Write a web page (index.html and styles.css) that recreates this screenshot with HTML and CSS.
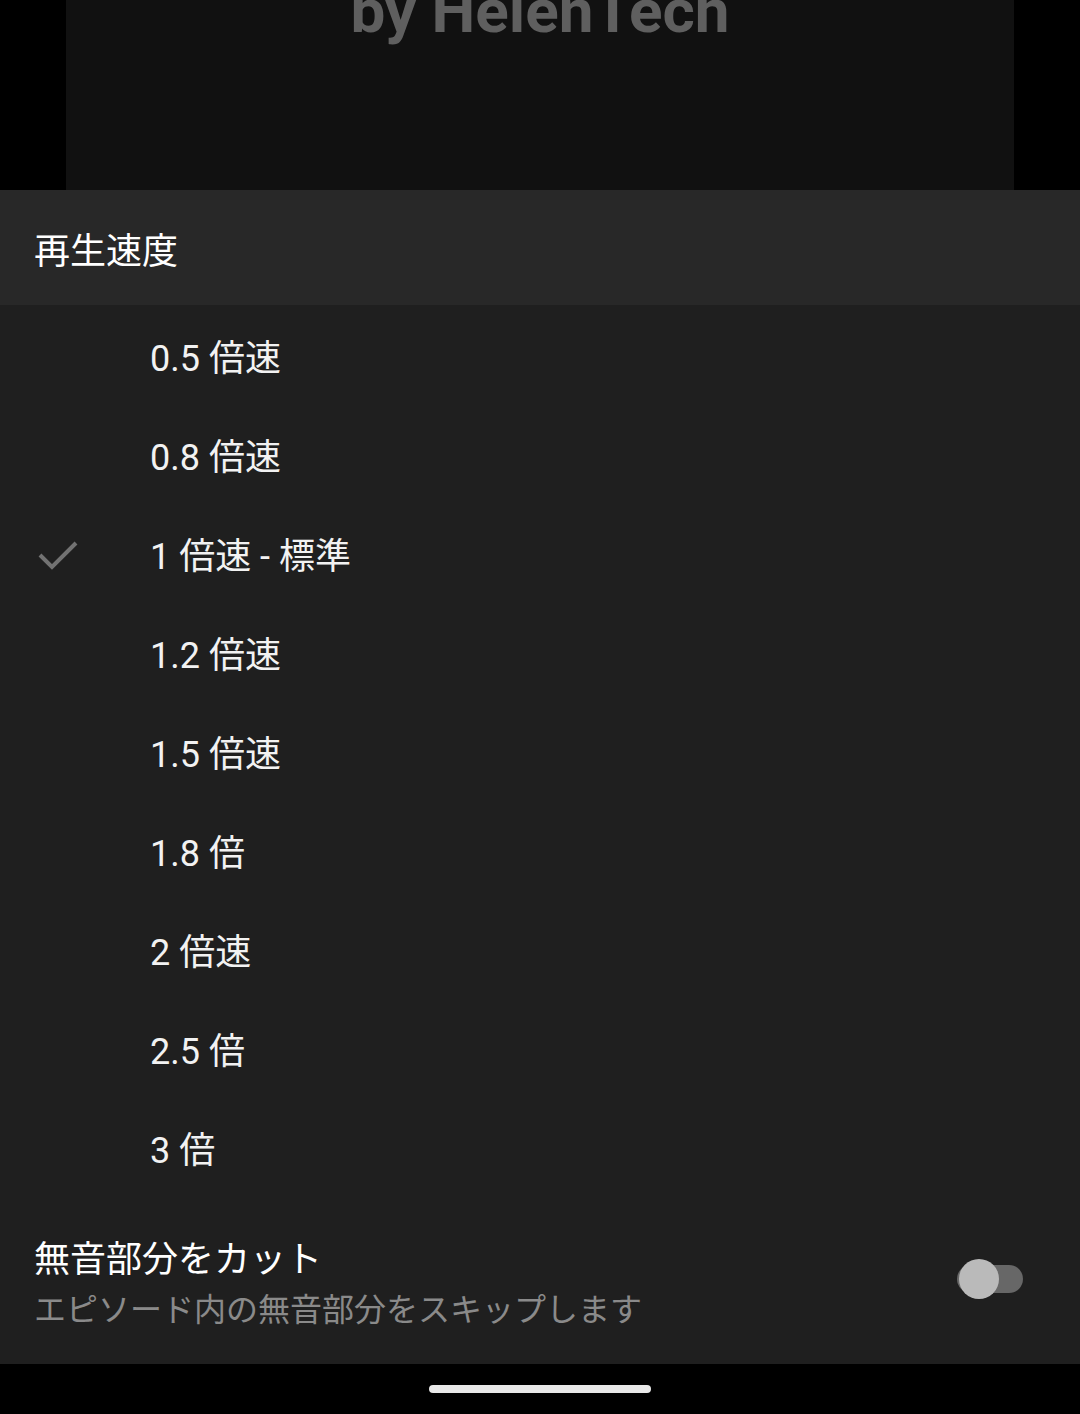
FILE: index.html
```html
<!DOCTYPE html>
<html lang="ja">
<head>
	<meta charset="UTF-8">
	<title>再生速度</title>
	<link rel="stylesheet" href="styles.css">
</head>
<body>
	<div class="video">
		<div class="frame">
			<p class="brand">by HelenTech</p>
		</div>
	</div>
	<div class="sheet">
		<div class="sheet-head">再生速度</div>
		<ul class="speeds">
			<li>0.5 倍速</li>
			<li>0.8 倍速</li>
			<li class="active">
				<svg class="check" width="50" height="40" viewBox="0 0 50 40">
					<polyline points="10,23 22,35 46,11" fill="none" stroke="#727272" stroke-width="4"/>
				</svg>
				1 倍速 - 標準
			</li>
			<li>1.2 倍速</li>
			<li>1.5 倍速</li>
			<li>1.8 倍</li>
			<li>2 倍速</li>
			<li>2.5 倍</li>
			<li>3 倍</li>
		</ul>
		<div class="trim">
			<div class="trim-text">
				<div class="trim-title">無音部分をカット</div>
				<div class="trim-sub">エピソード内の無音部分をスキップします</div>
			</div>
			<div class="switch"><span class="thumb"></span></div>
		</div>
	</div>
	<div class="navbar"><span class="handle"></span></div>
</body>
</html>
```

FILE: styles.css
```css
*{
	margin: 0;
	padding: 0;
	list-style-type: none;
	box-sizing: border-box;
}
body{
	width: 1080px;
	height: 1414px;
	background: #000;
	font-family: Roboto, "Noto Sans CJK JP", sans-serif;
	color: #f2f2f2;
	overflow: hidden;
}
.video{
	height: 190px;
	padding: 0 66px;
}
.frame{
	height: 190px;
	background: #111;
	overflow: hidden;
}
.brand{
	margin-top: -19px;
	text-align: center;
	font-size: 62px;
	line-height: 60px;
	font-weight: bold;
	color: #5f5f5f;
}
.sheet-head{
	height: 115px;
	background: #282828;
	padding: 0 34px;
	display: flex;
	align-items: center;
	font-size: 36px;
	color: #fff;
}
.sheet{
	background: #1f1f1f;
}
.speeds li{
	height: 99px;
	display: flex;
	align-items: center;
	padding-left: 150px;
	font-size: 36px;
	position: relative;
}
.check{
	position: absolute;
	left: 30px;
	top: 29px;
}
.trim{
	height: 168px;
	padding: 39px 57px 0 34px;
	display: flex;
	justify-content: space-between;
}
.trim-title{
	font-size: 36px;
	line-height: 50px;
	color: #fff;
}
.trim-sub{
	font-size: 32px;
	line-height: 50px;
	color: #8a8a8a;
}
.switch{
	margin-top: 30px;
	width: 66px;
	height: 28px;
	border-radius: 14px;
	background: #676767;
	position: relative;
}
.thumb{
	position: absolute;
	left: 2px;
	top: -6px;
	width: 40px;
	height: 40px;
	border-radius: 50%;
	background: #bababa;
}
.navbar{
	height: 50px;
	display: flex;
	justify-content: center;
	padding-top: 21px;
}
.handle{
	width: 222px;
	height: 8px;
	border-radius: 4px;
	background: #e8e8e8;
}
```
